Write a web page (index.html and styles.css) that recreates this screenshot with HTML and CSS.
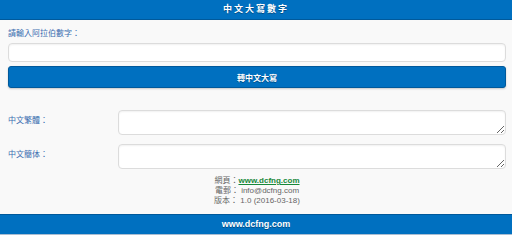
FILE: index.html
```html
<!DOCTYPE html>
<html lang="zh-Hant">
<head>
  <meta charset="UTF-8" />
  <meta name="viewport" content="width=device-width, initial-scale=1.0"/>
  <title>中文大寫數字</title>
  <link rel="stylesheet" href="styles.css">
</head>
<body>
  <div class="page">
    <header class="bar bar-top">中文大寫數字</header>

    <main class="content">
      <label class="field-label" for="num">請輸入阿拉伯數字：</label>
      <input type="text" id="num" class="text-input" />
      <button type="button" class="btn">轉中文大寫</button>

      <div class="result-grid">
        <label class="row-label" for="trad">中文繁體：</label>
        <textarea id="trad" class="text-area"></textarea>
        <label class="row-label" for="simp">中文簡体：</label>
        <textarea id="simp" class="text-area"></textarea>
      </div>

      <div class="info">
        <div>網頁：<a href="#" class="info-link">www.dcfng.com</a></div>
        <div>電郵： info@dcfng.com</div>
        <div>版本： 1.0 (2016-03-18)</div>
      </div>
    </main>

    <footer class="bar bar-bottom">www.dcfng.com</footer>
  </div>
</body>
</html>
```

FILE: styles.css
```css
:root {
  --blue: #0070c0;
  --blue-dark: #00599b;
  --label: #3a6db0;
}

html {
  background: #fff;
}

body {
  margin: 0;
  font-family: "Liberation Sans", Arial, "Noto Sans CJK TC", sans-serif;
}

.page {
  background: #f9f9f9;
}

.bar {
  background: var(--blue);
  color: #fff;
  text-align: center;
  font-weight: bold;
  font-size: 9px;
  text-shadow: 0 1px 0 #004d86;
}

.bar-top {
  height: 19px;
  line-height: 19px;
  letter-spacing: 2px;
  border-bottom: 1px solid var(--blue-dark);
}

.bar-bottom {
  height: 19px;
  line-height: 19px;
  border-top: 1px solid var(--blue-dark);
  border-bottom: 1px solid #a9bdd2;
}

.content {
  padding: 8px 6px 8px 8px;
}

.field-label {
  display: block;
  font-size: 8px;
  line-height: 12px;
  color: var(--label);
  margin-bottom: 3px;
}

.text-input,
.text-area {
  box-sizing: border-box;
  width: 100%;
  margin: 0;
  background: #fff;
  border: 1px solid #dcdcdc;
  border-radius: 4px;
  box-shadow: inset 0 1px 2px rgba(0, 0, 0, 0.06);
  font-family: inherit;
  font-size: 8px;
}

.text-input {
  display: block;
  height: 19px;
}

.btn {
  display: block;
  box-sizing: border-box;
  width: 100%;
  height: 22px;
  margin-top: 4px;
  background: var(--blue);
  border: 1px solid var(--blue-dark);
  border-radius: 3px;
  box-shadow: 0 1px 2px rgba(0, 0, 0, 0.2);
  color: #fff;
  font-family: inherit;
  font-size: 8px;
  font-weight: bold;
  text-shadow: 0 1px 0 #004d86;
}

.result-grid {
  display: grid;
  grid-template-columns: 110px 1fr;
  row-gap: 9px;
  margin-top: 22px;
}

.row-label {
  font-size: 8px;
  line-height: 12px;
  padding-top: 5px;
  color: var(--label);
}

.text-area {
  display: block;
  height: 25px;
  resize: vertical;
}

.info {
  margin-top: 7px;
  text-align: center;
  font-size: 8px;
  line-height: 10px;
  color: #666;
}

.info-link {
  color: #17883a;
  font-weight: bold;
}
```
